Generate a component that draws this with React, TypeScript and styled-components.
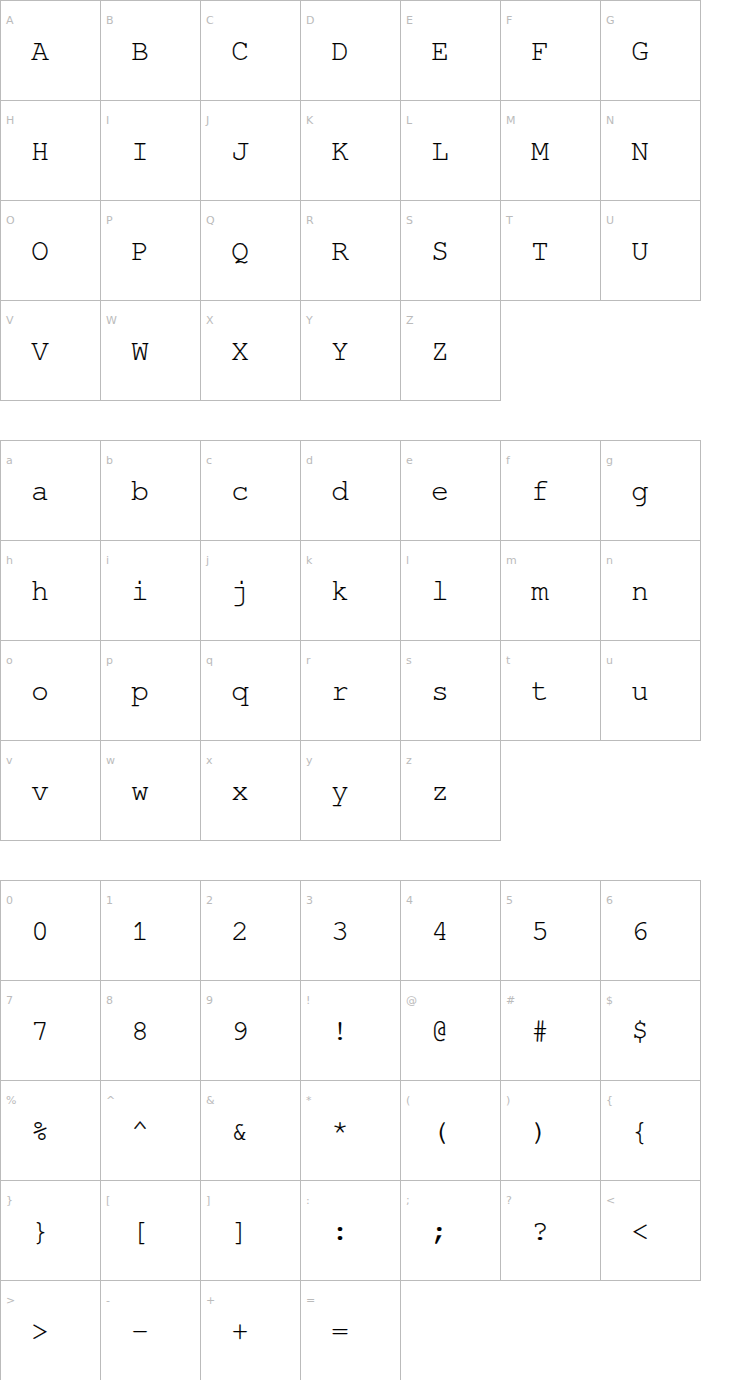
import React from "react";
import styled, { createGlobalStyle } from "styled-components";

const Global = createGlobalStyle`
  html, body { margin: 0; padding: 0; background: #fff; }
`;

const Page = styled.div`
  display: flex;
  flex-direction: column;
  gap: 40px;
`;

const Grid = styled.div`
  display: grid;
  grid-template-columns: repeat(7, 100px);
  grid-auto-rows: 100px;
  width: 701px;
`;

const Cell = styled.div`
  box-sizing: border-box;
  width: 101px;
  height: 101px;
  border: 1px solid #bbb;
  position: relative;
`;

const Label = styled.div`
  position: absolute;
  left: 5px;
  top: 13px;
  font-family: "DejaVu Sans", sans-serif;
  font-size: 11px;
  line-height: 13px;
  color: #bbb;
`;

const Glyph = styled.div`
  position: absolute;
  left: 30px;
  top: 33px;
  font-family: FreeMono, "Liberation Mono", monospace;
  font-size: 30px;
  line-height: 34px;
  color: #000;
  -webkit-text-stroke: 0.15px #000;
`;

const sections: string[][] = [
  "ABCDEFGHIJKLMNOPQRSTUVWXYZ".split(""),
  "abcdefghijklmnopqrstuvwxyz".split(""),
  "0123456789!@#$%^&*(){}[]:;?<>-+=".split(""),
];

export default function App() {
  return (
    <>
      <Global />
      <Page>
        {sections.map((chars, i) => (
          <Grid key={i}>
            {chars.map((c) => (
              <Cell key={c}>
                <Label>{c}</Label>
                <Glyph>{c}</Glyph>
              </Cell>
            ))}
          </Grid>
        ))}
      </Page>
    </>
  );
}
